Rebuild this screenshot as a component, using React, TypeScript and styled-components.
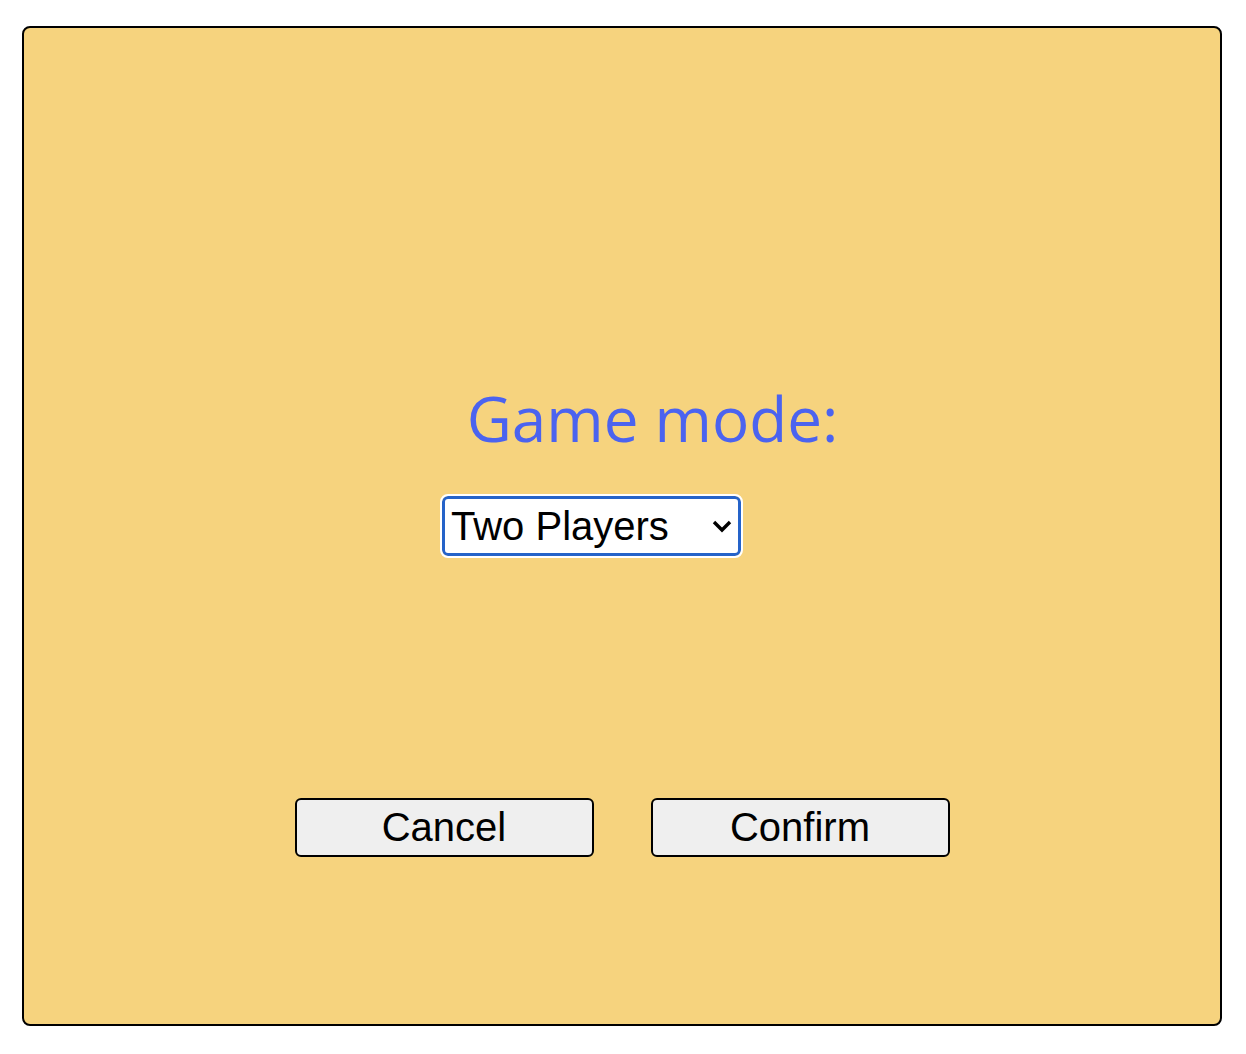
import styled, { createGlobalStyle } from "styled-components";
import { useState } from "react";

const GlobalStyle = createGlobalStyle`
    html, body {
        margin: 0;
        padding: 0;
        background: #fff;
    }
`;

const Page = styled.div`
    padding: 26px 24px 28px 22px;
`;

const Panel = styled.div`
    box-sizing: border-box;
    width: 1200px;
    height: 1000px;
    border: 2px solid #000;
    border-radius: 8px;
    background-color: #f6d37e;
    display: flex;
    flex-direction: column;
    align-items: center;
    padding-top: 351px;
`;

const Title = styled.h2`
    margin: 0 0 0 61px;
    font-family: "Open Sans", sans-serif;
    font-weight: 400;
    font-size: 62px;
    line-height: 78px;
    color: #4b63ef;
`;

const SelectBox = styled.div`
    position: relative;
    margin: 39px 61px 0 0;
`;

const ModeSelect = styled.select`
    appearance: none;
    box-sizing: border-box;
    width: 299px;
    height: 60px;
    padding: 0 40px 0 6px;
    font-family: "Liberation Sans", Arial, sans-serif;
    font-size: 40px;
    color: #000;
    background: #fff;
    border: 3px solid #2563c9;
    border-radius: 6px;
    outline: 2px solid #fff;
    cursor: pointer;
`;

const Chevron = styled.svg`
    position: absolute;
    right: 8px;
    top: 23px;
    pointer-events: none;
`;

const ButtonRow = styled.div`
    display: flex;
    gap: 57px;
    margin-top: 242px;
`;

const ActionButton = styled.button`
    box-sizing: border-box;
    width: 299px;
    height: 59px;
    font-family: "Liberation Sans", Arial, sans-serif;
    font-size: 40px;
    color: #000;
    background-color: #efefef;
    border: 2px solid #000;
    border-radius: 6px;
    cursor: pointer;
`;

const App = () => {
    const [mode, setMode] = useState("two");

    return (
        <Page>
            <GlobalStyle />
            <Panel>
                <Title>Game mode:</Title>
                <SelectBox>
                    <ModeSelect value={mode} onChange={(e) => setMode(e.target.value)}>
                        <option value="one">One Player</option>
                        <option value="two">Two Players</option>
                    </ModeSelect>
                    <Chevron width="22" height="16" viewBox="0 0 22 16">
                        <path d="M3 3 L11 11 L19 3" fill="none" stroke="#000" strokeWidth="3.4" />
                    </Chevron>
                </SelectBox>
                <ButtonRow>
                    <ActionButton>Cancel</ActionButton>
                    <ActionButton>Confirm</ActionButton>
                </ButtonRow>
            </Panel>
        </Page>
    );
};

export default App;
